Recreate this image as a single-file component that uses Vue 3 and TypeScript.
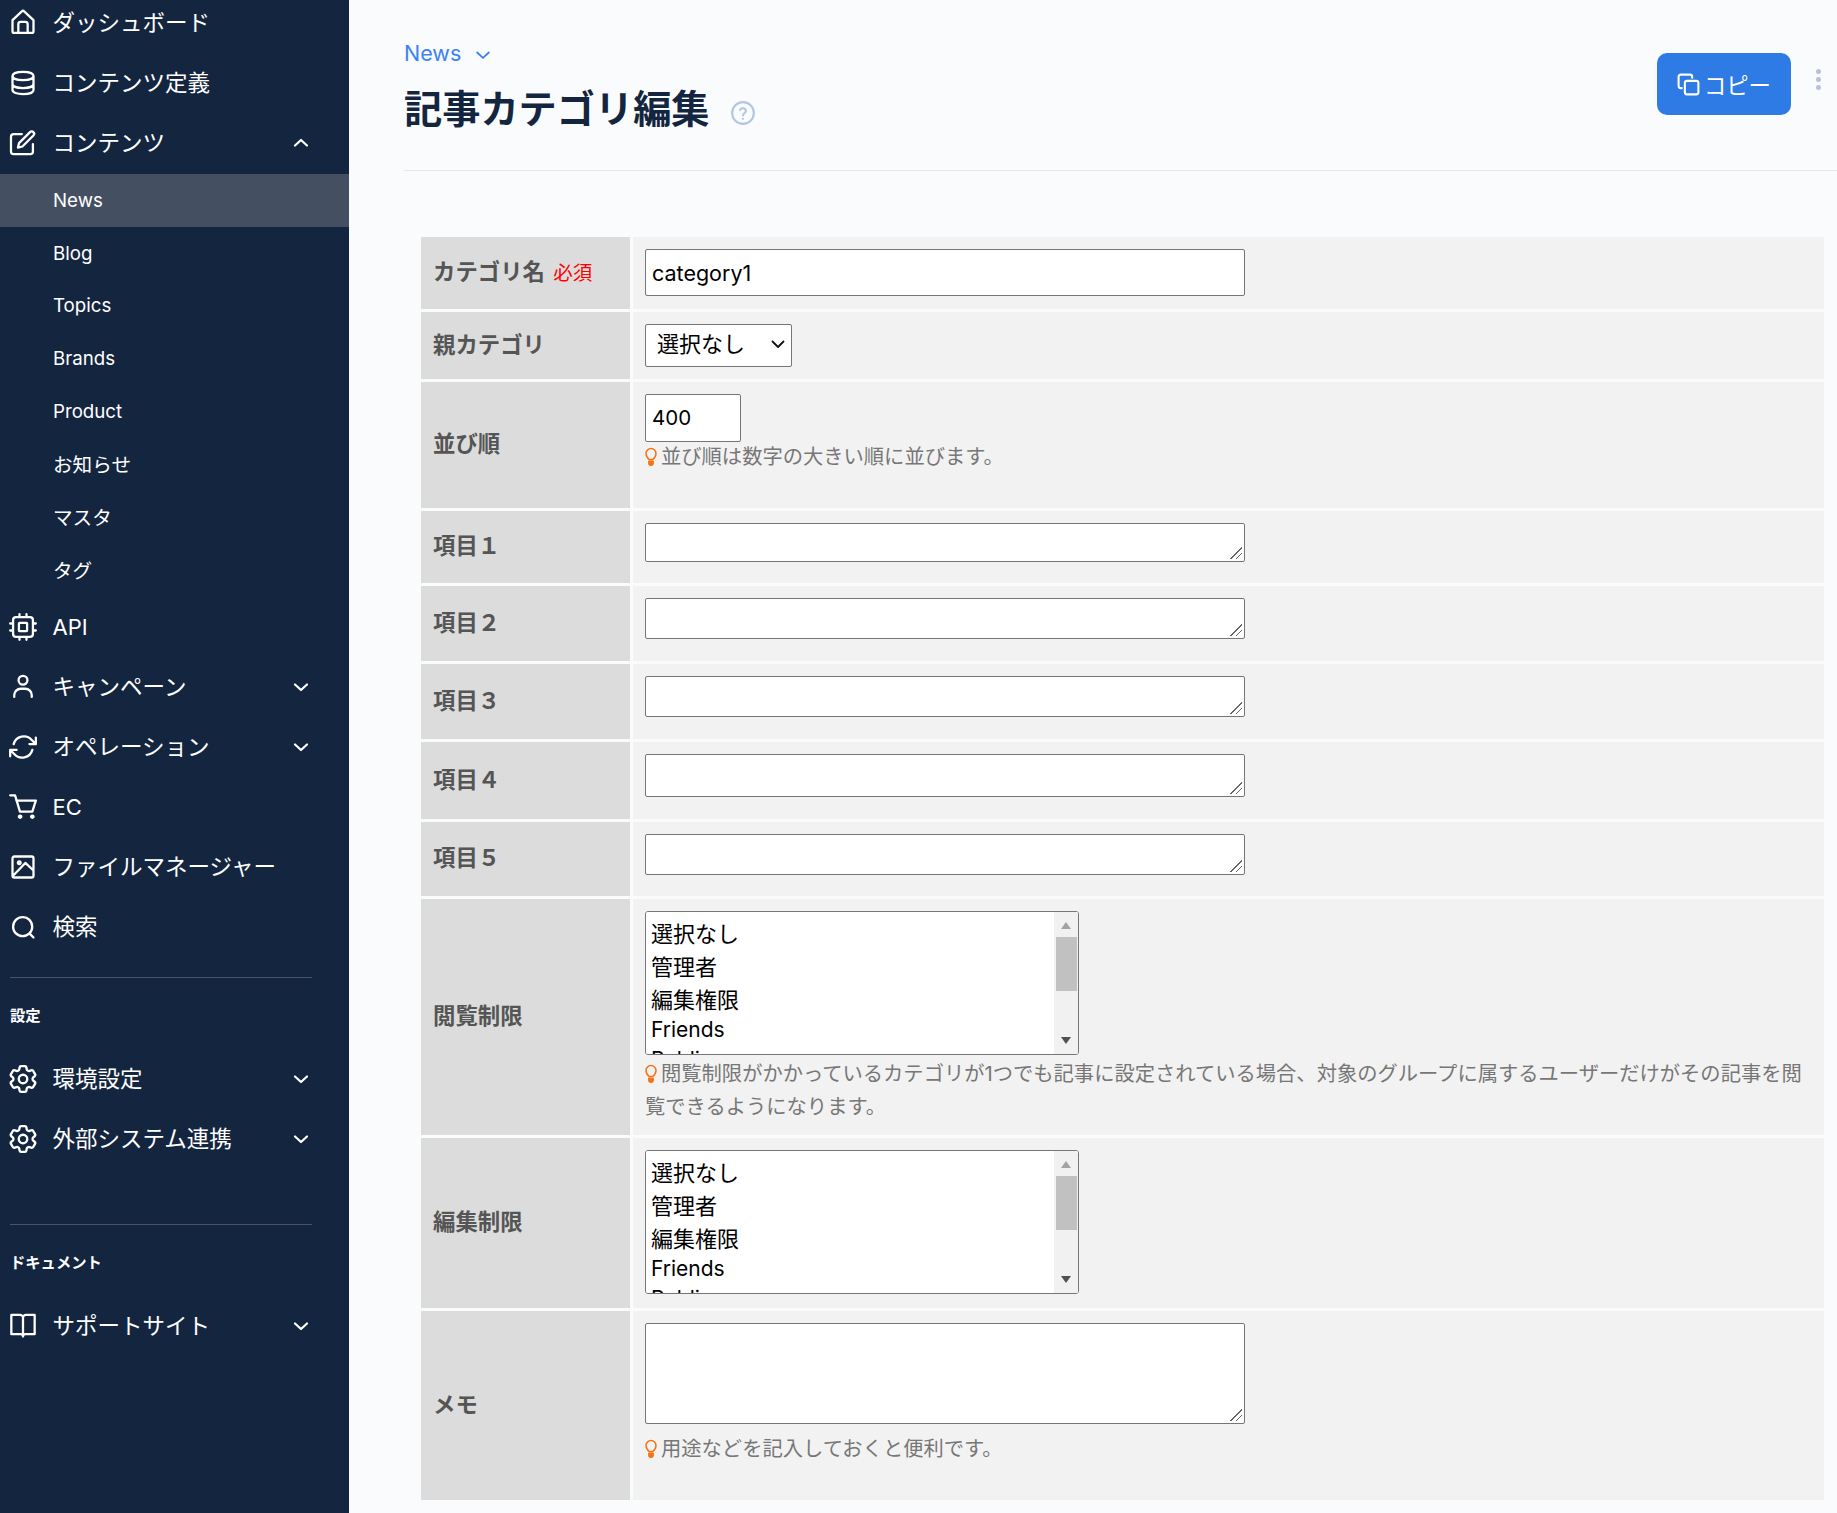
<script setup lang="ts">
interface Item { label: string; icon: string; chevron?: 'up' | 'down'; kids?: string[] }

const gearPath = 'M9.594 3.94c.09-.542.56-.94 1.11-.94h2.593c.55 0 1.02.398 1.11.94l.213 1.281c.063.374.313.686.645.87.074.04.147.083.22.127.325.196.72.257 1.075.124l1.217-.456a1.125 1.125 0 0 1 1.37.49l1.296 2.247a1.125 1.125 0 0 1-.26 1.431l-1.003.827c-.293.241-.438.613-.43.992a7.723 7.723 0 0 1 0 .255c-.008.378.137.75.43.991l1.004.827c.424.35.534.955.26 1.43l-1.298 2.247a1.125 1.125 0 0 1-1.369.491l-1.217-.456c-.355-.133-.75-.072-1.076.124a6.47 6.47 0 0 1-.22.128c-.331.183-.581.495-.644.869l-.213 1.281c-.09.543-.56.94-1.11.94h-2.594c-.55 0-1.019-.398-1.11-.94l-.213-1.281c-.062-.374-.312-.686-.644-.87a6.52 6.52 0 0 1-.22-.127c-.325-.196-.72-.257-1.076-.124l-1.217.456a1.125 1.125 0 0 1-1.369-.49l-1.297-2.247a1.125 1.125 0 0 1 .26-1.431l1.004-.827c.292-.24.437-.613.43-.991a6.932 6.932 0 0 1 0-.255c.007-.38-.138-.751-.43-.992l-1.004-.827a1.125 1.125 0 0 1-.26-1.43l1.297-2.247a1.125 1.125 0 0 1 1.37-.491l1.216.456c.356.133.751.072 1.076-.124.072-.044.146-.086.22-.128.332-.183.582-.495.644-.869l.214-1.28Z M15 12a3 3 0 1 1-6 0 3 3 0 0 1 6 0Z'

const icons: Record<string, string> = {
  home: 'M3 9.500 11 2a1.500 1.500 0 0 1 2 0l8 7.500V19a1.500 1.500 0 0 1-1.500 1.500h-15A1.500 1.500 0 0 1 3 19ZM8 20.500V13a2 2 0 0 1 2-2h4a2 2 0 0 1 2 2v7.500',
  db: 'M12 2.500c5 0 9 1.300 9 3.500v12c0 2.200-4 3.500-9 3.500s-9-1.300-9-3.500V6c0-2.200 4-3.500 9-3.500ZM3 6c0 2.200 4 3.500 9 3.500s9-1.300 9-3.500M3 12.800c0 2.200 4 3.500 9 3.500s9-1.300 9-3.500',
  edit: 'M11 4.300H4a2.300 2.300 0 0 0-2.300 2.300v12.600A2.300 2.300 0 0 0 4 21.500h14.200a2.300 2.300 0 0 0 2.300-2.300V13M18 2.700a2 2 0 0 1 2.900 2.900L11.500 15l-3.800.9.900-3.800Z',
  cpu: 'M9 1v2.500m6-2.500v2.500M9 20.500V23m6-2.500V23M3.500 9H1m2.500 6H1m22-6h-2.500m2.500 6h-2.500M6 3.500h12A2.500 2.500 0 0 1 20.500 6v12a2.500 2.500 0 0 1-2.500 2.500H6A2.500 2.500 0 0 1 3.500 18V6A2.500 2.500 0 0 1 6 3.500ZM9 8.500h6a.5.5 0 0 1 .5.5v6a.5.5 0 0 1-.5.5H9a.5.5 0 0 1-.5-.5V9a.5.5 0 0 1 .5-.5Z',
  user: 'M15.800 6.200a3.800 3.800 0 1 1-7.600 0 3.800 3.800 0 0 1 7.600 0ZM4.500 20.500v-1.500a5.500 5.500 0 0 1 5.500-5.500h4a5.500 5.500 0 0 1 5.500 5.500v1.500',
  sync: 'M1 14.500h5.500M1 14.500V20M1 14.500 4.500 18a9 9 0 0 0 15.500-3.500M4 9.500A9 9 0 0 1 19.500 6L23 9.500M23 9.500h-5.500M23 9.500V4',
  cart: 'M1 2h4.200L9.400 16H20L23 6.600H6.300M9.500 19.300a1 1 0 1 0 .01 0ZM20 19.300a1 1 0 1 0 .01 0Z',
  photo: 'M4.500 3h15A1.500 1.500 0 0 1 21 4.500v15a1.500 1.500 0 0 1-1.500 1.500h-15A1.500 1.500 0 0 1 3 19.500v-15A1.500 1.500 0 0 1 4.500 3ZM3.500 19.500 14 8.500l7 6.500M8.800 7.100a1.200 1.200 0 1 0 .01 0Z',
  search: 'M19.900 11.700a8.200 8.200 0 1 1-16.400 0 8.200 8.200 0 0 1 16.400 0ZM17.700 17.700 21 21',
  gear: gearPath,
  book: 'M2 2.500h7.500A2.500 2.500 0 0 1 12 5v16a2 2 0 0 0-2-2H2ZM22 2.500h-7.500A2.500 2.500 0 0 0 12 5v16a2 2 0 0 1 2-2h8Z',
}

const isCjk = (s: string) => /[^\x00-\x7f]/.test(s)

const topItems: Item[] = [
  { label: 'ダッシュボード', icon: 'home' },
  { label: 'コンテンツ定義', icon: 'db' },
  { label: 'コンテンツ', icon: 'edit', chevron: 'up', kids: ['News', 'Blog', 'Topics', 'Brands', 'Product', 'お知らせ', 'マスタ', 'タグ'] },
  { label: 'API', icon: 'cpu' },
  { label: 'キャンペーン', icon: 'user', chevron: 'down' },
  { label: 'オペレーション', icon: 'sync', chevron: 'down' },
  { label: 'EC', icon: 'cart' },
  { label: 'ファイルマネージャー', icon: 'photo' },
  { label: '検索', icon: 'search' },
]
const settingItems: Item[] = [
  { label: '環境設定', icon: 'gear', chevron: 'down' },
  { label: '外部システム連携', icon: 'gear', chevron: 'down' },
]
const docItems: Item[] = [{ label: 'サポートサイト', icon: 'book', chevron: 'down' }]
const groups = [
  { title: '', cls: 'g0', items: topItems },
  { title: '設定', cls: 'g1', items: settingItems },
  { title: 'ドキュメント', cls: 'g2', items: docItems },
]
const fieldRows = [
  { label: '項目１', row: 'r-a', area: 'ta-a' },
  { label: '項目２', row: 'r-b', area: 'ta-b' },
  { label: '項目３', row: 'r-b', area: 'ta-b' },
  { label: '項目４', row: 'r-c', area: 'ta-c' },
  { label: '項目５', row: 'r-b2', area: 'ta-b' },
]
const groupOptions = ['選択なし', '管理者', '編集権限', 'Friends', 'Public', 'Guest']
const limitRows = [
  { label: '閲覧制限', row: 'r-view', hint: '閲覧制限がかかっているカテゴリが1つでも記事に設定されている場合、対象のグループに属するユーザーだけがその記事を閲覧できるようになります。' },
  { label: '編集制限', row: 'r-edit', hint: '' },
]
</script>

<template>
  <div class="page">
    <aside class="side">
      <nav class="nav">
        <section v-for="g in groups" :key="g.cls" :class="['group', g.cls]">
          <h4 v-if="g.title" class="group-title">{{ g.title }}</h4>
          <template v-for="it in g.items" :key="it.label">
            <a class="item">
              <svg :class="['ico', 'ico-' + it.icon]" viewBox="0 0 24 24" fill="none" stroke="currentColor" stroke-linecap="round" stroke-linejoin="round">
                <g :transform="it.icon === 'gear' ? 'translate(12 12) scale(1.22) translate(-12 -12)' : undefined"><path :d="icons[it.icon]" /></g>
              </svg>
              <span :class="['item-label', { cjk: isCjk(it.label) }]">{{ it.label }}</span>
              <svg v-if="it.chevron" class="chev" viewBox="0 0 24 24" fill="none" stroke="currentColor" stroke-width="2.200" stroke-linecap="round" stroke-linejoin="round">
                <path :d="it.chevron === 'up' ? 'M6 14.500l6-5.500 6 5.500' : 'M6 9.500l6 5.500 6-5.500'" />
              </svg>
            </a>
            <a v-for="(k, i) in it.kids" :key="k" :class="['sub', { active: i === 0, cjk: isCjk(k) }]">{{ k }}</a>
          </template>
        </section>
      </nav>
    </aside>

    <main class="main">
      <header class="head">
        <div class="head-left">
          <a class="crumb">News
            <svg class="crumb-chev" viewBox="0 0 24 24" fill="none" stroke="currentColor" stroke-width="2.200" stroke-linecap="round" stroke-linejoin="round"><path d="M5 9l7 6.500L19 9" /></svg>
          </a>
          <div class="title-row">
            <h1 class="title">記事カテゴリ編集</h1>
            <svg class="help" viewBox="0 0 24 24" fill="none" stroke="currentColor" stroke-width="2" stroke-linecap="round" stroke-linejoin="round"><circle cx="12" cy="12" r="10" /><path d="M9.300 9.300a2.800 2.800 0 0 1 5.400.9c0 1.800-2.700 2.300-2.700 4" /><path d="M12 17.300v.1" /></svg>
          </div>
        </div>
        <div class="head-right">
          <button class="copy" type="button">
            <svg class="copy-ico" viewBox="0 0 24 24" fill="none" stroke="currentColor" stroke-width="2" stroke-linecap="round" stroke-linejoin="round"><rect x="8.500" y="8.500" width="13" height="13" rx="2" /><path d="M5.500 15.500h-1a2 2 0 0 1-2-2v-9a2 2 0 0 1 2-2h9a2 2 0 0 1 2 2v1" /></svg>
            コピー
          </button>
          <div class="kebab"><i /><i /><i /></div>
        </div>
      </header>

      <form class="form-wrap" @submit.prevent>
        <table class="form">
          <tbody>
            <tr class="r-name">
              <th>カテゴリ名 <span class="req">必須</span></th>
              <td><input class="text" type="text" value="category1" /></td>
            </tr>
            <tr class="r-parent">
              <th>親カテゴリ</th>
              <td>
                <div class="pick-wrap">
                  <select class="pick"><option>選択なし</option></select>
                  <svg class="pick-arrow" viewBox="0 0 14 9" fill="none" stroke="#111" stroke-width="1.800" stroke-linecap="round" stroke-linejoin="round"><path d="M1.500 1.500 7 7l5.500-5.500" /></svg>
                </div>
              </td>
            </tr>
            <tr class="r-order">
              <th>並び順</th>
              <td>
                <input class="num" type="text" value="400" />
                <p class="hint hint-order">
                  <svg class="bulb" viewBox="0 0 12 19" fill="none" stroke="#f97316" stroke-width="1.500" stroke-linecap="round" stroke-linejoin="round"><path d="M4.200 12.500C2.300 11 1 9.200 1 6.500a5 5 0 0 1 10 0c0 2.700-1.300 4.500-3.200 6Z" /><path d="M3.800 14.200h4.400v1.800a2.200 2.200 0 0 1-4.400 0Z" fill="#f97316" /></svg>並び順は数字の大きい順に並びます。
                </p>
              </td>
            </tr>
            <tr v-for="f in fieldRows" :key="f.label" :class="f.row">
              <th>{{ f.label }}</th>
              <td><textarea :class="['area', f.area]" /></td>
            </tr>
            <tr v-for="l in limitRows" :key="l.label" :class="l.row">
              <th>{{ l.label }}</th>
              <td>
                <div class="list-wrap">
                  <select class="list" multiple size="5">
                    <option v-for="o in groupOptions" :key="o" :class="{ latin: !isCjk(o) }">{{ o }}</option>
                  </select>
                  <div class="sb" aria-hidden="true">
                    <span class="sb-up" />
                    <span class="sb-thumb" />
                    <span class="sb-down" />
                  </div>
                </div>
                <p v-if="l.hint" class="hint hint-wide">
                  <svg class="bulb" viewBox="0 0 12 19" fill="none" stroke="#f97316" stroke-width="1.500" stroke-linecap="round" stroke-linejoin="round"><path d="M4.200 12.500C2.300 11 1 9.200 1 6.500a5 5 0 0 1 10 0c0 2.700-1.300 4.500-3.200 6Z" /><path d="M3.800 14.200h4.400v1.800a2.200 2.200 0 0 1-4.400 0Z" fill="#f97316" /></svg>{{ l.hint }}
                </p>
              </td>
            </tr>
            <tr class="r-memo">
              <th>メモ</th>
              <td>
                <textarea class="area ta-memo" />
                <p class="hint hint-memo">
                  <svg class="bulb" viewBox="0 0 12 19" fill="none" stroke="#f97316" stroke-width="1.500" stroke-linecap="round" stroke-linejoin="round"><path d="M4.200 12.500C2.300 11 1 9.200 1 6.500a5 5 0 0 1 10 0c0 2.700-1.300 4.500-3.200 6Z" /><path d="M3.800 14.200h4.400v1.800a2.200 2.200 0 0 1-4.400 0Z" fill="#f97316" /></svg>用途などを記入しておくと便利です。
                </p>
              </td>
            </tr>
          </tbody>
        </table>
      </form>
    </main>
  </div>
</template>

<style>
html, body { margin: 0; height: 1513px; overflow: hidden; background: #fafbfd; }
</style>

<style scoped>
.page {
  display: flex;
  width: 1837px;
  height: 1513px;
  overflow: hidden;
  font-family: Inter, "Noto Sans CJK JP", sans-serif;
  background: #fafbfd;
  color: #14263f;
}
.side {
  flex: 0 0 349px;
  height: 1513px;
  background: #14263f;
  color: #fff;
  overflow: hidden;
}
.nav { margin-top: -7.500px; }
.group-title {
  margin: 0;
  font-size: 15.300px;
  font-weight: 700;
  line-height: 20px;
}
.g1 {
  margin: 20px 37px 0 10px;
  padding-top: 28px;
  border-top: 1px solid #46546b;
}
.g1 .group-title { margin-bottom: 23px; }
.g2 { margin: 55px 37px 0 10px; padding-top: 28px; border-top: 1px solid #46546b; }
.g2 .group-title { margin-bottom: 23px; }
.g1 .item, .g2 .item { margin: 0 -37px 0 -10px; }
.item {
  display: flex;
  align-items: center;
  height: 60px;
  padding: 0 36px 0 9px;
  font-size: 22px;
  line-height: 30px;
}
.ico { flex: 0 0 28px; width: 28px; height: 28px; stroke-width: 1.950; }
.ico-gear { stroke-width: 1.650; }
.item-label { flex: 1; margin-left: 15.500px; }
.item-label.cjk { font-size: 22.500px; }
.chev { flex: 0 0 24px; width: 24px; height: 24px; }
.sub {
  display: flex;
  align-items: center;
  height: 52.700px;
  padding-left: 53px;
  font-size: 18.700px;
}
.sub.cjk { font-size: 19.600px; }
.sub.active { margin-top: 1.500px; background: #454f62; }
.sub:nth-last-child(7) { margin-bottom: 1.500px; }

.main { flex: 1; min-width: 0; }
.head {
  display: flex;
  justify-content: space-between;
  height: 170px;
  margin-left: 55px;
  border-bottom: 1px solid #e2e8f0;
}
.crumb {
  display: flex;
  align-items: center;
  gap: 12px;
  margin-top: 36px;
  color: #3b82f6;
  font-size: 21.500px;
  line-height: 34px;
}
.crumb-chev { width: 20px; height: 20px; margin-top: 3px; }
.title-row { display: flex; align-items: center; gap: 20px; margin-top: 15px; }
.title {
  margin: 0;
  font-size: 38.200px;
  line-height: 48px;
  font-weight: 700;
  color: #14263f;
}
.help { width: 26px; height: 26px; color: #b4c6e0; margin-top: 8px; }
.head-right { display: flex; align-items: flex-start; gap: 25px; margin-right: 16px; }
.copy {
  display: flex;
  align-items: center;
  gap: 3px;
  margin-top: 53px;
  width: 134px;
  height: 62px;
  padding: 0 0 0 19px;
  border: 0;
  border-radius: 10px;
  background: #2f7be5;
  color: #fff;
  font: inherit;
  font-size: 22.300px;
}
.copy-ico { width: 25px; height: 25px; flex: none; }
.kebab {
  display: flex;
  flex-direction: column;
  gap: 3px;
  margin-top: 69px;
}
.kebab i { display: block; width: 5px; height: 5px; border-radius: 50%; background: #b8c2d8; }

.form-wrap { padding: 63px 10px 0 69px; }
.form {
  width: 100%;
  table-layout: fixed;
  border-collapse: separate;
  border-spacing: 3px;
  font-size: 22px;
}
.form th {
  width: 197px;
  padding: 0 0 6px 12px;
  background: #dcdcdc;
  color: #555;
  text-align: left;
  font-weight: 700;
  font-size: 22.400px;
  vertical-align: middle;
}
.form td {
  padding: 12px;
  background: #f2f2f2;
  vertical-align: top;
  line-height: 1;
}
.req { margin-left: 3px; color: #f00; font-size: 19.500px; font-weight: 400; }
.r-name { height: 72px; }
.r-parent { height: 67px; }
.r-order { height: 126px; }
.r-a { height: 72px; }
.r-b { height: 75px; }
.r-b2 { height: 74px; }
.r-c { height: 77px; }
.r-view { height: 236px; }
.r-edit { height: 170px; }
.r-memo { height: 189px; }
input, select, textarea {
  box-sizing: border-box;
  display: block;
  margin: 0;
  font-family: Inter, "Noto Sans CJK JP", sans-serif;
  color: #000;
  background: #fff;
  border: 1px solid #767676;
  border-radius: 2px;
}
.text { width: 600px; height: 47px; padding: 0 6px; font-size: 21.500px; }
.pick-wrap { position: relative; width: 147px; }
.pick {
  appearance: none;
  width: 147px;
  height: 43px;
  padding: 0 0 4px 11px;
  font-size: 22px;
}
.pick-arrow { position: absolute; right: 7px; top: 16px; width: 14px; height: 9px; pointer-events: none; }
.num { width: 96px; height: 48px; padding: 0 6px 2px; font-size: 20.500px; }
.area {
  width: 600px;
  resize: none;
  padding: 2px;
  font-size: 22px;
  background: linear-gradient(135deg, transparent 0 49%, #666 49% 55%, transparent 55% 72%, #666 72% 78%, transparent 78%) right 2px bottom 2px / 12px 12px no-repeat, #fff;
}
.ta-a { height: 39px; }
.ta-b { height: 41px; }
.ta-c { height: 43px; }
.ta-memo { height: 101px; }
.list-wrap { position: relative; width: 434px; height: 144px; }
.list { width: 434px; height: 144px; padding: 3px 0 0; font-size: 22px; border-radius: 3px; }
.list option { padding: 0.500px 5px; min-height: 0; }
.list option.latin { padding: 2.500px 5px; font-size: 21px; }
.sb {
  position: absolute;
  top: 1px;
  right: 1px;
  bottom: 1px;
  width: 24px;
  background: #f1f1f1;
  border-radius: 0 2px 2px 0;
}
.sb-thumb {
  position: absolute;
  top: 25px;
  left: 2px;
  width: 21px;
  height: 54px;
  background: #c1c1c1;
}
.sb-up, .sb-down {
  position: absolute;
  left: 6.500px;
  width: 0;
  height: 0;
  border-left: 5.500px solid transparent;
  border-right: 5.500px solid transparent;
}
.sb-up { top: 10px; border-bottom: 7px solid #a3a3a3; }
.sb-down { bottom: 10px; border-top: 7px solid #505050; }
.hint {
  margin: 0;
  color: #777;
  font-size: 20.300px;
  line-height: 33px;
}
.hint-order { margin-top: -2px; }
.hint-wide { padding-top: 2px; }
.hint-memo { padding-top: 8px; }
.bulb { display: inline-block; width: 12px; height: 19px; vertical-align: -2px; margin-right: 4px; }
</style>
